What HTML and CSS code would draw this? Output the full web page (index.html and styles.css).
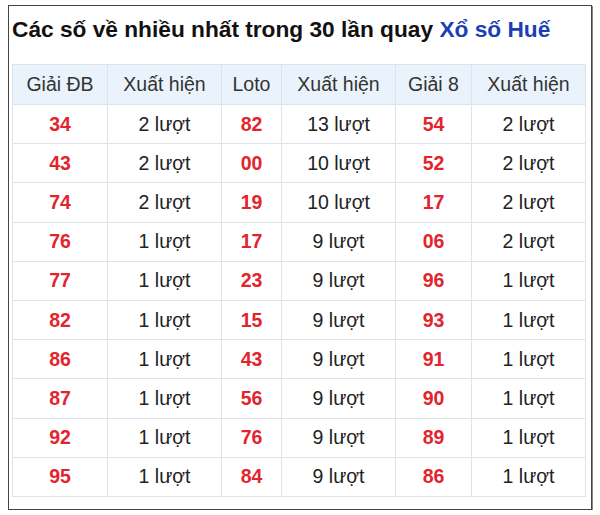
FILE: index.html
```html
<!DOCTYPE html>
<html lang="vi">
<head>
<meta charset="utf-8">
<link rel="stylesheet" href="styles.css">
</head>
<body>
<div class="frame">
  <h2 class="title">Các số về nhiều nhất trong 30 lần quay <span class="hl">Xổ số Huế</span></h2>
  <table class="stats">
    <colgroup>
      <col class="c1"><col class="c2"><col class="c3"><col class="c4"><col class="c5"><col class="c6">
    </colgroup>
    <thead>
      <tr><th>Giải ĐB</th><th>Xuất hiện</th><th>Loto</th><th>Xuất hiện</th><th>Giải 8</th><th>Xuất hiện</th></tr>
    </thead>
    <tbody>
      <tr><td class="n">34</td><td>2 lượt</td><td class="n">82</td><td>13 lượt</td><td class="n">54</td><td>2 lượt</td></tr>
      <tr><td class="n">43</td><td>2 lượt</td><td class="n">00</td><td>10 lượt</td><td class="n">52</td><td>2 lượt</td></tr>
      <tr><td class="n">74</td><td>2 lượt</td><td class="n">19</td><td>10 lượt</td><td class="n">17</td><td>2 lượt</td></tr>
      <tr><td class="n">76</td><td>1 lượt</td><td class="n">17</td><td>9 lượt</td><td class="n">06</td><td>2 lượt</td></tr>
      <tr><td class="n">77</td><td>1 lượt</td><td class="n">23</td><td>9 lượt</td><td class="n">96</td><td>1 lượt</td></tr>
      <tr><td class="n">82</td><td>1 lượt</td><td class="n">15</td><td>9 lượt</td><td class="n">93</td><td>1 lượt</td></tr>
      <tr><td class="n">86</td><td>1 lượt</td><td class="n">43</td><td>9 lượt</td><td class="n">91</td><td>1 lượt</td></tr>
      <tr><td class="n">87</td><td>1 lượt</td><td class="n">56</td><td>9 lượt</td><td class="n">90</td><td>1 lượt</td></tr>
      <tr><td class="n">92</td><td>1 lượt</td><td class="n">76</td><td>9 lượt</td><td class="n">89</td><td>1 lượt</td></tr>
      <tr><td class="n">95</td><td>1 lượt</td><td class="n">84</td><td>9 lượt</td><td class="n">86</td><td>1 lượt</td></tr>
    </tbody>
  </table>
</div>
</body>
</html>
```
FILE: styles.css
```css
html, body {
  margin: 0;
  padding: 0;
  background: #fff;
}
body {
  font-family: "Liberation Sans", Arial, sans-serif;
  color: #222;
}
.frame {
  box-sizing: border-box;
  margin: 5px 0 0 8px;
  width: 584px;
  height: 505px;
  border: 1px solid #444;
  box-shadow: 1px 1px 0 #888;
  padding: 0 3px;
}
.title {
  margin: 0;
  padding-top: 10px;
  height: 58px;
  box-sizing: border-box;
  font-size: 22.7px;
  font-weight: bold;
  color: #111;
  line-height: 26px;
  white-space: nowrap;
}
.hl {
  color: #1c3fb5;
}
.stats {
  border-collapse: collapse;
  width: 573px;
  table-layout: fixed;
  font-size: 19.5px;
}
.c1 { width: 95px; }
.c2 { width: 114px; }
.c3 { width: 60px; }
.c4 { width: 114px; }
.c5 { width: 76px; }
.c6 { width: 114px; }
.stats th, .stats td {
  border: 1px solid #dde3ea;
  text-align: center;
  padding: 0;
}
.stats th {
  background: #eaf3fc;
  font-weight: normal;
  height: 39px;
  color: #333;
}
.stats td {
  height: 38.2px;
  color: #222;
}
.stats td.n {
  color: #e2252d;
  font-weight: bold;
}
```
